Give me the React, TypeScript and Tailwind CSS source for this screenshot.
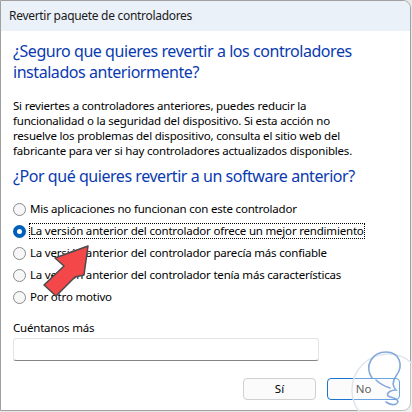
import React from "react";

const font = { fontFamily: '"Noto Sans", "Open Sans", sans-serif' };

const options = [
  "Mis aplicaciones no funcionan con este controlador",
  "La versión anterior del controlador ofrece un mejor rendimiento",
  "La versión anterior del controlador parecía más confiable",
  "La versión anterior del controlador tenía más características",
  "Por otro motivo",
];

const Radio: React.FC<{ checked?: boolean }> = ({ checked }) =>
  checked ? (
    <span className="w-[13px] h-[13px] rounded-full bg-[#005fb8] flex items-center justify-center shrink-0">
      <span className="w-[5px] h-[5px] rounded-full bg-white" />
    </span>
  ) : (
    <span className="w-[13px] h-[13px] rounded-full border border-[#8a8a8a] bg-[#f7f7f7] shrink-0" />
  );

const App: React.FC = () => {
  return (
    <div className="relative w-[412px] h-[412px] bg-[#e8e8e8] overflow-hidden" style={font}>
      <div className="w-[411px] h-[411px] bg-white border border-[#a0a0a0] rounded-tr-[8px] rounded-br-[8px] flex flex-col overflow-hidden">
        <div className="h-[30px] bg-[#eaf1f9] flex items-center pl-[8px] text-[12px] tracking-[-0.3px] text-[#1a1a1a] shrink-0">
          Revertir paquete de controladores
        </div>

        <div className="pl-[12px] pr-[8px]">
          <h1 className="mt-[10px] text-[16px] leading-[21px] text-[#0a3ab0] tracking-[-0.45px]">
            ¿Seguro que quieres revertir a los controladores
            <br />
            instalados anteriormente?
          </h1>

          <p className="mt-[15px] text-[11.5px] leading-[15px] tracking-[-0.2px] text-black">
            Si reviertes a controladores anteriores, puedes reducir la
            <br />
            funcionalidad o la seguridad del dispositivo. Si esta acción no
            <br />
            resuelve los problemas del dispositivo, consulta el sitio web del
            <br />
            fabricante para ver si hay controladores actualizados disponibles.
          </p>

          <h2 className="mt-[8px] text-[16px] leading-[21px] text-[#0a3ab0] tracking-[-0.45px]">
            ¿Por qué quieres revertir a un software anterior?
          </h2>

          <div className="mt-[11px] flex flex-col">
            {options.map((o, i) => (
              <div key={o} className="h-[22px] flex items-center gap-[3px] text-[11.5px] tracking-[-0.2px] text-black">
                <Radio checked={i === 1} />
                <span
                  className={
                    i === 1
                      ? "border border-dotted border-black leading-[14px]"
                      : "leading-[14px] border border-transparent"
                  }
                >
                  {o}
                </span>
              </div>
            ))}
          </div>

          <div className="mt-[12px] text-[11.5px] tracking-[-0.2px] text-black leading-[15px]">Cuéntanos más</div>
          <div className="mt-[3px] w-[306px] h-[23px] border border-[#e3e3e3] border-b-[#858585] rounded-[3px] bg-white" />

          <div className="mt-[17px] flex justify-end gap-[11px] pr-[2px]">
            <button className="w-[73px] h-[22px] rounded-[4px] border border-[#d0d0d0] bg-[#fbfbfb] text-[11.5px] text-black">
              Sí
            </button>
            <button className="w-[73px] h-[22px] rounded-[4px] border-[1.5px] border-[#1a74d0] bg-[#fbfbfb] text-[11.5px] text-black">
              No
            </button>
          </div>
        </div>
      </div>

      {/* red arrow */}
      <svg className="absolute left-0 top-0 pointer-events-none" width="412" height="412">
        <polygon
          points="88,246 55,258 64,266 44,285 56,296 75,277 84,275"
          fill="#f4474a"
          stroke="#4a4a4a"
          strokeWidth="1.5"
          strokeLinejoin="round"
        />
      </svg>

      {/* watermark */}
      <svg className="absolute left-0 top-0 pointer-events-none" width="412" height="412">
        <circle cx="388" cy="390" r="36" fill="white" fillOpacity="0.35" stroke="#dfe5ee" strokeWidth="1.5" />
        <path
          d="M372 378 C364 366 372 352 386 352 C400 352 404 366 396 376 C392 382 392 386 396 390 C392 390 386 392 388 396 C392 398 398 398 398 402 C396 406 390 405 386 402 M376 380 C380 384 384 386 390 388"
          fill="none"
          stroke="#6f9ad6"
          strokeWidth="1.6"
          strokeLinecap="round"
          opacity="0.85"
        />
      </svg>
    </div>
  );
};

export default App;
